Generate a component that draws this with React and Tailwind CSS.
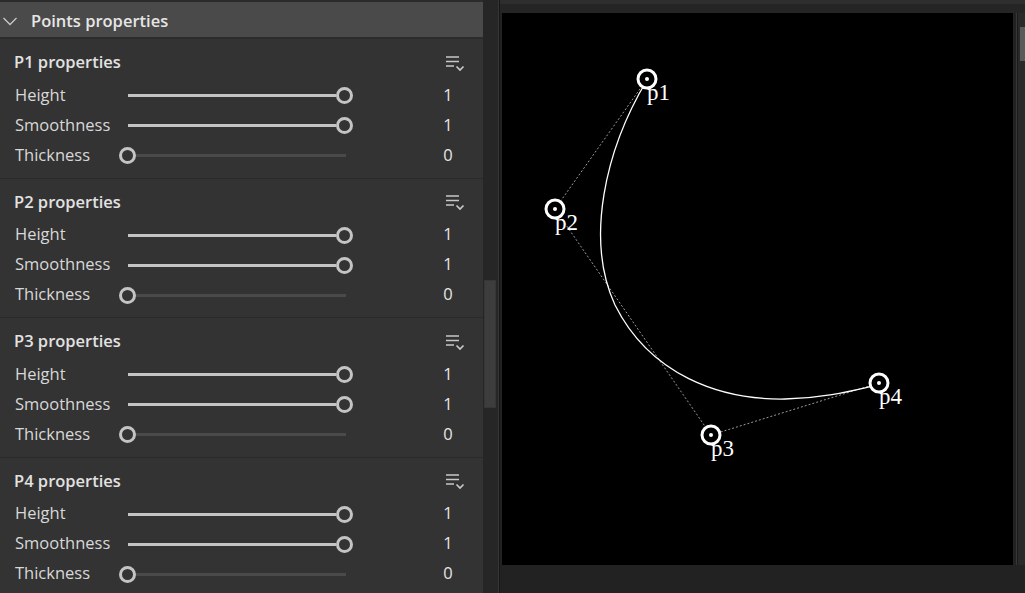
const points = [
  { name: 'P1' },
  { name: 'P2' },
  { name: 'P3' },
  { name: 'P4' },
];

const nodes = [
  { label: 'p1', x: 647, y: 79 },
  { label: 'p2', x: 555, y: 209 },
  { label: 'p3', x: 711, y: 435 },
  { label: 'p4', x: 879, y: 383 },
];

const MenuIcon = () => (
  <svg width="22" height="18" viewBox="0 0 22 18" className="text-[#c8c8c8]">
    <path d="M1 3h13M1 7.5h13M1 12h8" stroke="currentColor" strokeWidth="1.4" fill="none" />
    <path d="M11.5 12.5l3.5 3.5 3.5-3.5" stroke="currentColor" strokeWidth="1.7" fill="none" />
  </svg>
);

// value is 0 or 1 here, so the thumb just sits at one end
const Slider = ({ value }) => (
  <div className="relative w-[234px] h-[20px]">
    <div className="absolute left-[9px] right-[7px] top-[9px] h-[3px] bg-[#4a4a4a]" />
    {value > 0 && <div className="absolute left-[9px] right-[17px] top-[9px] h-[3px] bg-[#c4c4c4]" />}
    <div
      className={`absolute top-[2px] w-[17px] h-[17px] rounded-full border-[3px] border-[#c4c4c4] bg-[#333333] ${value > 0 ? 'right-0' : 'left-0'}`}
    />
  </div>
);

const Row = ({ label, value }) => (
  <div className="flex items-center h-[30px]">
    <div className="w-[105px] pl-[1px] text-[16.5px] text-[#d8d8d8]">{label}</div>
    <Slider value={value} />
    <div className="ml-[85px] w-[20px] text-center text-[16.5px] text-[#e6e6e6]">{value}</div>
  </div>
);

const Section = ({ name }) => (
  <div className="shrink-0 h-[139.5px] border-b border-[#2a2a2a] px-[14px]">
    <div className="flex items-center justify-between h-[41px] pt-[6px] pr-[2px]">
      <div className="text-[16.5px] font-semibold text-[#e2e2e2]">{name} properties</div>
      <MenuIcon />
    </div>
    <Row label="Height" value={1} />
    <Row label="Smoothness" value={1} />
    <Row label="Thickness" value={0} />
  </div>
);

const App = () => {
  return (
    <div
      className="flex h-[593px] w-full overflow-hidden bg-[#222222]"
      style={{ fontFamily: '"Open Sans", "Noto Sans", sans-serif' }}
    >
      {/* properties panel */}
      <div className="w-[483px] h-full overflow-hidden bg-[#333333] flex flex-col">
        <div className="shrink-0 h-[2px] bg-[#2b2b2b]" />
        <div className="shrink-0 flex items-center h-[37px] pt-[3px] bg-[#4a4a4a] border-b-2 border-[#2c2c2c]">
          <svg width="16" height="10" viewBox="0 0 16 10" className="ml-[2px] text-[#c8c8c8]">
            <path d="M1.5 2l6.5 6.5 6.5-6.5" stroke="currentColor" strokeWidth="1.3" fill="none" />
          </svg>
          <div className="ml-[13px] text-[16.5px] font-semibold text-[#e6e6e6]">Points properties</div>
        </div>
        {points.map((p) => (
          <Section key={p.name} name={p.name} />
        ))}
      </div>

      {/* scrollbar */}
      <div className="w-[15px] h-full bg-[#262626] pt-[280px] pl-[1px]">
        <div className="w-[12px] h-[128px] bg-[#3d3d3d] border border-[#363636]" />
      </div>
      <div className="w-[1px] h-full bg-[#363636]" />
      <div className="w-[1px] h-full bg-[#161616]" />

      {/* preview */}
      <div className="flex-1 h-full flex flex-col">
        <div className="h-[4px] bg-[#2e2e2e]" />
        <div className="h-[9px] bg-[#252525]" />
        <div className="flex pl-[2px]">
          <div className="w-[511px] h-[552px] bg-black">
            <svg width="511" height="552" viewBox="502 13 511 552">
              <path d="M647 79L555 209L711 435L879 383" stroke="#9a9a9a" strokeWidth="1" strokeDasharray="2 2" fill="none" />
              <path
                d="M647 80C605 150 585 240 615 305C650 375 720 400 785 399C825 398 855 390 873 386"
                stroke="#ffffff"
                strokeWidth="1.3"
                fill="none"
              />
              {nodes.map((n) => (
                <g key={n.label}>
                  <circle cx={n.x} cy={n.y} r="9" stroke="#ffffff" strokeWidth="3" fill="black" />
                  <circle cx={n.x} cy={n.y} r="2" fill="#ffffff" />
                  <text
                    x={n.x}
                    y={n.y + 21}
                    fill="#ffffff"
                    fontSize="23"
                    fontFamily='"Liberation Serif", serif'
                  >
                    {n.label}
                  </text>
                </g>
              ))}
            </svg>
          </div>
          <div className="w-[3px] bg-[#222222]" />
          <div className="w-[1px] h-[552px] bg-[#383838]" />
          <div className="w-[1px] h-[552px] bg-[#1a1a1a]" />
          <div className="flex-1 bg-[#2a2a2a] pt-[14px]">
            <div className="w-[5px] ml-[2px] h-[34px] bg-[#5a5a5a]" />
          </div>
        </div>
        <div className="flex-1 bg-[#222222]" />
      </div>
    </div>
  );
};

export default App;
